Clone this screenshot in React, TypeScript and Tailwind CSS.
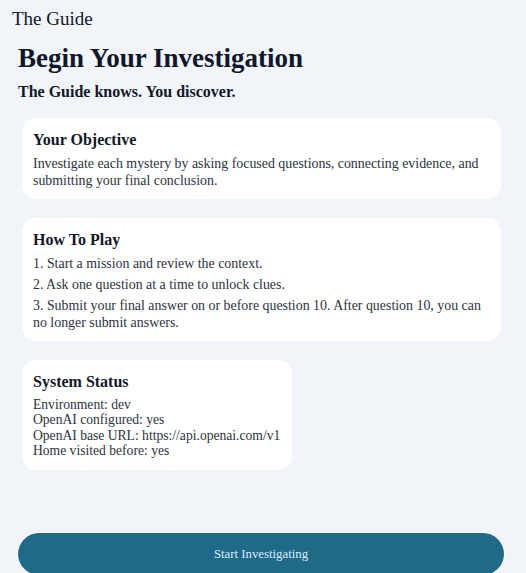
const serif = { fontFamily: '"Liberation Serif", "DejaVu Serif", serif' }

function Card({ title, children, className = '' }: { title: string; children: React.ReactNode; className?: string }) {
  return (
    <section className={`rounded-[14px] bg-white pl-[11px] pr-3 pt-3 ${className}`}>
      <h2 className="mb-[5px] text-[16px] font-bold leading-[20px] text-[#111827]">{title}</h2>
      {children}
    </section>
  )
}

export default function App() {
  return (
    <div className="h-[573px] overflow-hidden bg-[#f1f4f9] text-[#2d3340]" style={serif}>
      <header className="pl-[12px] pt-[8px] text-[19px] leading-[22px] text-[#111827]">The Guide</header>

      <main className="pl-[18px] pt-[12px]">
        <h1 className="text-[27px] font-bold leading-[32px] text-[#0f172a]">Begin Your Investigation</h1>
        <p className="mt-[8px] text-[16px] font-bold leading-[20px] text-[#111827]">The Guide knows. You discover.</p>

        <div className="mt-[16px] flex w-[483px] flex-col gap-[19px] pl-[4px]">
          <Card title="Your Objective" className="pb-[10px]">
            <p className="text-[13.9px] leading-[17px]">
              Investigate each mystery by asking focused questions, connecting evidence, and submitting your final
              conclusion.
            </p>
          </Card>

          <Card title="How To Play" className="pb-[10px]">
            <ol className="flex flex-col gap-[4px] text-[13.9px] leading-[17px]">
              <li>1. Start a mission and review the context.</li>
              <li>2. Ask one question at a time to unlock clues.</li>
              <li>
                3. Submit your final answer on or before question 10. After question 10, you can no longer submit
                answers.
              </li>
            </ol>
          </Card>

          <Card title="System Status" className="w-[270px] pb-[11px]">
            <div className="whitespace-nowrap text-[13.6px] leading-[15.4px]">
              <div>Environment: dev</div>
              <div>OpenAI configured: yes</div>
              <div>OpenAI base URL: https://api.openai.com/v1</div>
              <div>Home visited before: yes</div>
            </div>
          </Card>
        </div>

        <div className="mt-[63px]">
          <button className="h-[42px] w-[486px] rounded-full bg-[#1f6a88] text-[12.8px] leading-[16px] text-[#dbeafe] ring-1 ring-white/70">
            Start Investigating
          </button>
        </div>
      </main>
    </div>
  )
}
